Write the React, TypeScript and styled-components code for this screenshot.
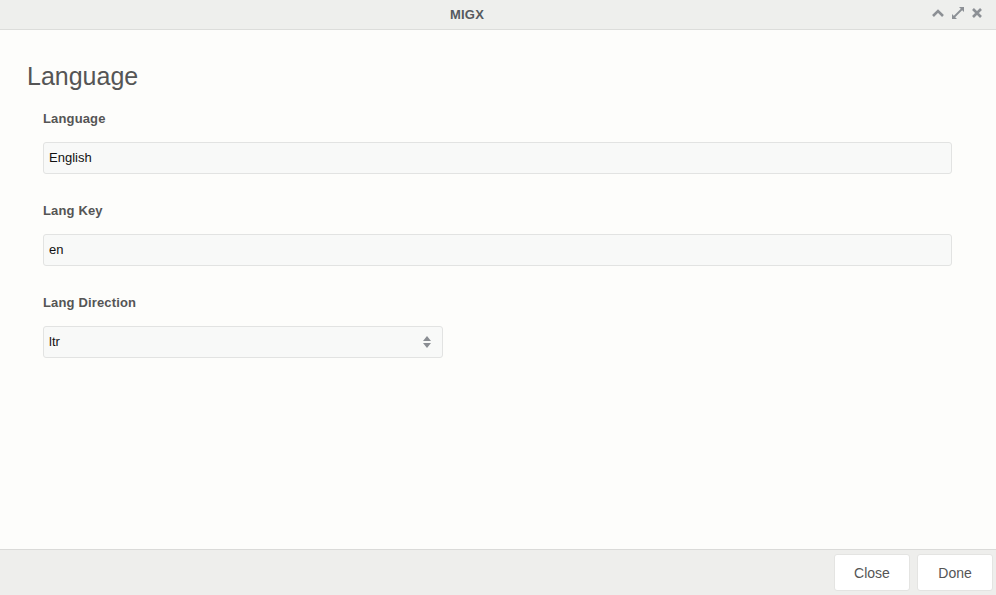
import React from "react";
import styled, { createGlobalStyle } from "styled-components";

const Global = createGlobalStyle`
  html, body { margin: 0; padding: 0; }
  body {
    font-family: "Liberation Sans", Arial, sans-serif;
    background: #fdfdfb;
  }
`;

const Window = styled.div`
  width: 996px;
  height: 595px;
  display: flex;
  flex-direction: column;
  background: #fdfdfb;
`;

const Header = styled.div`
  height: 30px;
  flex: none;
  box-sizing: border-box;
  padding-right: 62px;
  background: #eeefed;
  border-bottom: 1px solid #dcdddb;
  display: flex;
  align-items: center;
  justify-content: center;
  position: relative;
`;

const HeaderTitle = styled.div`
  font-size: 13px;
  font-weight: bold;
  color: #555a60;
  letter-spacing: 0.2px;
`;

const Tools = styled.div`
  position: absolute;
  right: 13px;
  top: 6px;
  display: flex;
  gap: 6px;
  align-items: center;
`;

const Body = styled.div`
  flex: 1;
  padding: 32px 44px 0 27px;
`;

const Title = styled.h1`
  margin: 0 0 20px;
  font-size: 25px;
  font-weight: normal;
  color: #555;
`;

const Fields = styled.div`
  padding-left: 16px;
  display: flex;
  flex-direction: column;
  gap: 29.5px;
`;

const Field = styled.div`
  display: flex;
  flex-direction: column;
  gap: 15.5px;
`;

const Label = styled.label`
  font-size: 13px;
  font-weight: bold;
  color: #555;
  letter-spacing: 0.15px;
`;

const Input = styled.div<{ $width?: number }>`
  box-sizing: border-box;
  height: 32px;
  width: ${(p) => (p.$width ? `${p.$width}px` : "100%")};
  background: #f8f9f8;
  border: 1px solid #e2e3e2;
  border-radius: 3px;
  padding: 0 5px;
  display: flex;
  align-items: center;
  justify-content: space-between;
  font-size: 13px;
  color: #111;
`;

const SelectArrow = styled.span`
  display: flex;
  margin-right: 5px;
`;

const Footer = styled.div`
  height: 45px;
  flex: none;
  background: #eeeeec;
  border-top: 1px solid #dadad8;
  display: flex;
  justify-content: flex-end;
  align-items: center;
  gap: 7px;
  padding-right: 3px;
`;

const Button = styled.button`
  width: 76px;
  height: 37px;
  background: #fff;
  border: 1px solid #e4e4e2;
  border-radius: 3px;
  font-family: "Liberation Sans", Arial, sans-serif;
  font-size: 14px;
  color: #555;
`;

const Caret = () => (
  <svg width="10" height="14" viewBox="0 0 10 14">
    <path d="M5 1L9 6H1z M5 13L9 8H1z" fill="#8a8e93" />
  </svg>
);

const App: React.FC = () => (
  <>
    <Global />
    <Window>
      <Header>
        <HeaderTitle>MIGX</HeaderTitle>
        <Tools>
          <svg width="14" height="14" viewBox="0 0 14 14">
            <path d="M2 10L7 5l5 5" stroke="#8c9095" strokeWidth="2.6" fill="none" />
          </svg>
          <svg width="14" height="14" viewBox="0 0 14 14">
            <path d="M2 12L12 2" stroke="#8c9095" strokeWidth="1.8" />
            <path d="M8 1h5v5z M1 8v5h5z" fill="#8c9095" />
          </svg>
          <svg width="12" height="14" viewBox="0 0 12 14">
            <path d="M2 3l8 8M10 3l-8 8" stroke="#8c9095" strokeWidth="2.6" />
          </svg>
        </Tools>
      </Header>
      <Body>
        <Title>Language</Title>
        <Fields>
          <Field>
            <Label>Language</Label>
            <Input>English</Input>
          </Field>
          <Field>
            <Label>Lang Key</Label>
            <Input>en</Input>
          </Field>
          <Field>
            <Label>Lang Direction</Label>
            <Input $width={400}>
              ltr
              <SelectArrow>
                <Caret />
              </SelectArrow>
            </Input>
          </Field>
        </Fields>
      </Body>
      <Footer>
        <Button>Close</Button>
        <Button>Done</Button>
      </Footer>
    </Window>
  </>
);

export default App;
